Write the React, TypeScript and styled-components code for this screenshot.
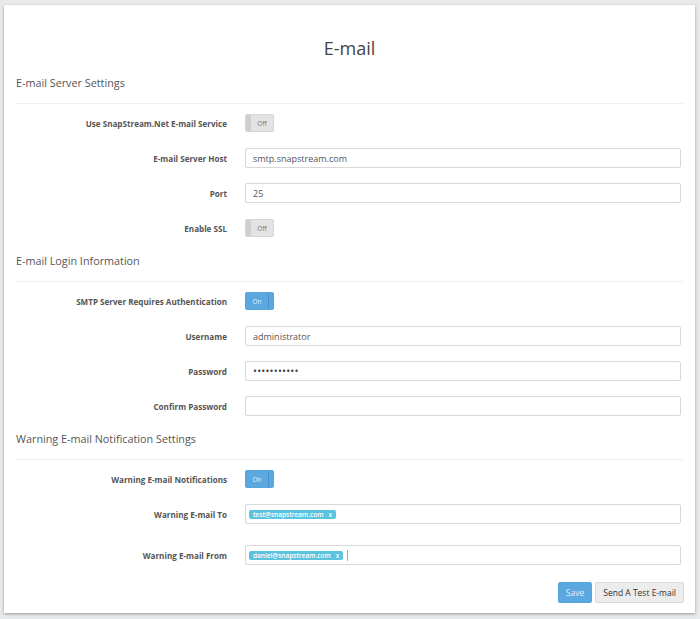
import React from 'react';
import styled, { createGlobalStyle } from 'styled-components';

const GlobalStyle = createGlobalStyle`
  html, body {
    margin: 0;
    padding: 0;
    background: #e9eaec;
    font-family: 'Open Sans', 'Liberation Sans', Arial, sans-serif;
  }
  * {
    box-sizing: border-box;
  }
`;

const Page = styled.div`
  padding: 5px 5px 6px 4px;
`;

const Card = styled.div`
  background: #fff;
  box-shadow: 0 1px 3px rgba(0, 0, 0, 0.35);
  padding: 31px 12px 10px;
`;

const Title = styled.h1`
  margin: 0 0 13px;
  font-size: 18px;
  line-height: 24px;
  font-weight: 400;
  color: #444;
  text-align: center;
`;

const Section = styled.section`
  & + & {
    margin-top: 13px;
  }
`;

const Heading = styled.h2`
  margin: 0;
  font-size: 10.8px;
  line-height: 20px;
  font-weight: 400;
  color: #555;
`;

const Divider = styled.hr`
  border: 0;
  border-top: 1px solid #f0f0f0;
  margin: 10px 0 9px;
`;

const Rows = styled.div`
  display: flex;
  flex-direction: column;
  gap: 15px;
`;

const Row = styled.div<{ $extra?: number }>`
  display: grid;
  grid-template-columns: 211px 1fr;
  column-gap: 18px;
  align-items: center;
  min-height: 20px;
  margin-bottom: ${({ $extra }) => $extra ?? 0}px;
`;

const Label = styled.label`
  text-align: right;
  font-size: 8.1px;
  font-weight: 700;
  color: #555;
  white-space: nowrap;
`;

const Control = styled.div`
  padding-right: 2px;
  display: flex;
  align-items: center;
`;

const TextInput = styled.input`
  width: 100%;
  height: 20px;
  border: 1px solid #d8d8d8;
  border-radius: 2px;
  padding: 0 7px;
  font-family: inherit;
  font-size: 9px;
  color: #555;
  background: #fff;
  outline: none;

  &[type='password'] {
    color: #444;
    font-size: 10.5px;
    letter-spacing: 0.2px;
  }
`;

const Switch = styled.div<{ $on: boolean }>`
  display: flex;
  flex-direction: ${({ $on }) => ($on ? 'row' : 'row-reverse')};
  width: 29px;
  height: 18px;
  border-radius: 2px;
  overflow: hidden;
  border: 1px solid ${({ $on }) => ($on ? '#58a4dc' : '#d6d6d6')};
  background: ${({ $on }) => ($on ? '#5ba7df' : '#e3e3e3')};
`;

const SwitchLabel = styled.span<{ $on: boolean }>`
  flex: 1;
  display: flex;
  align-items: center;
  justify-content: center;
  font-size: 6.5px;
  color: ${({ $on }) => ($on ? '#e8f2fb' : '#777')};
`;

const SwitchHandle = styled.span<{ $on: boolean }>`
  width: 5px;
  background: ${({ $on }) => ($on ? '#5ba7df' : '#cfcfcf')};
  border-left: ${({ $on }) => ($on ? '1px solid #4a8fc6' : '0')};
`;

const TagBox = styled.div`
  width: 100%;
  height: 20px;
  border: 1px solid #d8d8d8;
  border-radius: 2px;
  padding: 0 3px;
  display: flex;
  align-items: center;
  gap: 4px;
`;

const Tag = styled.span`
  display: inline-flex;
  align-items: center;
  gap: 5px;
  height: 9px;
  padding: 0 4px;
  border-radius: 2px;
  background: #5bc3de;
  color: #fff;
  font-size: 6.5px;
  font-weight: 600;
  line-height: 9px;
`;

const Caret = styled.span`
  width: 1px;
  height: 11px;
  background: #aaa;
`;

const Actions = styled.div`
  display: flex;
  justify-content: flex-end;
  gap: 3px;
  margin-top: 17px;
  margin-right: -1px;
`;

const Button = styled.button<{ $primary?: boolean }>`
  height: 21px;
  padding: 0 7px;
  border-radius: 2px;
  font-family: inherit;
  font-size: 8.5px;
  cursor: pointer;
  border: 1px solid ${({ $primary }) => ($primary ? '#58a4dc' : '#dadada')};
  background: ${({ $primary }) => ($primary ? '#5ba7df' : '#ececec')};
  color: ${({ $primary }) => ($primary ? '#e3effa' : '#333')};
`;

const Toggle = ({ on }: { on: boolean }) => (
  <Switch $on={on}>
    <SwitchLabel $on={on}>{on ? 'On' : 'Off'}</SwitchLabel>
    <SwitchHandle $on={on} />
  </Switch>
);

const App = () => (
  <>
    <GlobalStyle />
    <Page>
      <Card>
        <Title>E-mail</Title>

        <Section>
          <Heading>E-mail Server Settings</Heading>
          <Divider />
          <Rows>
            <Row>
              <Label>Use SnapStream.Net E-mail Service</Label>
              <Control>
                <Toggle on={false} />
              </Control>
            </Row>
            <Row>
              <Label>E-mail Server Host</Label>
              <Control>
                <TextInput type='text' defaultValue='smtp.snapstream.com' />
              </Control>
            </Row>
            <Row>
              <Label>Port</Label>
              <Control>
                <TextInput type='text' defaultValue='25' />
              </Control>
            </Row>
            <Row>
              <Label>Enable SSL</Label>
              <Control>
                <Toggle on={false} />
              </Control>
            </Row>
          </Rows>
        </Section>

        <Section>
          <Heading>E-mail Login Information</Heading>
          <Divider />
          <Rows>
            <Row>
              <Label>SMTP Server Requires Authentication</Label>
              <Control>
                <Toggle on />
              </Control>
            </Row>
            <Row>
              <Label>Username</Label>
              <Control>
                <TextInput type='text' defaultValue='administrator' />
              </Control>
            </Row>
            <Row>
              <Label>Password</Label>
              <Control>
                <TextInput type='password' defaultValue='secretpass1' />
              </Control>
            </Row>
            <Row>
              <Label>Confirm Password</Label>
              <Control>
                <TextInput type='password' defaultValue='' />
              </Control>
            </Row>
          </Rows>
        </Section>

        <Section>
          <Heading>Warning E-mail Notification Settings</Heading>
          <Divider />
          <Rows>
            <Row>
              <Label>Warning E-mail Notifications</Label>
              <Control>
                <Toggle on />
              </Control>
            </Row>
            <Row $extra={6}>
              <Label>Warning E-mail To</Label>
              <Control>
                <TagBox>
                  <Tag>
                    test@snapstream.com <span>x</span>
                  </Tag>
                </TagBox>
              </Control>
            </Row>
            <Row>
              <Label>Warning E-mail From</Label>
              <Control>
                <TagBox>
                  <Tag>
                    daniel@snapstream.com <span>x</span>
                  </Tag>
                  <Caret />
                </TagBox>
              </Control>
            </Row>
          </Rows>
        </Section>

        <Actions>
          <Button $primary>Save</Button>
          <Button>Send A Test E-mail</Button>
        </Actions>
      </Card>
    </Page>
  </>
);

export default App;
